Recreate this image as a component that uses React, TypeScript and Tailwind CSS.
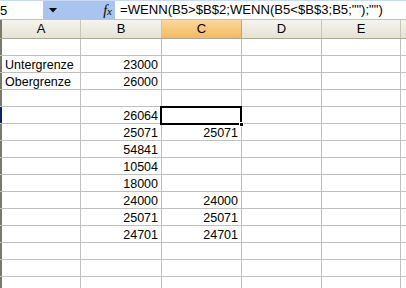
import React from 'react'

const cols = [
  { key: 'A', w: 'w-[79px]' },
  { key: 'B', w: 'w-[81px]' },
  { key: 'C', w: 'w-[80px]' },
  { key: 'D', w: 'w-[80px]' },
  { key: 'E', w: 'w-[79px]' },
]

// row data: [A, B, C]
const rows: [string, string, string][] = [
  ['', '', ''],
  ['Untergrenze', '23000', ''],
  ['Obergrenze', '26000', ''],
  ['', '', ''],
  ['', '26064', ''],
  ['', '25071', '25071'],
  ['', '54841', ''],
  ['', '10504', ''],
  ['', '18000', ''],
  ['', '24000', '24000'],
  ['', '25071', '25071'],
  ['', '24701', '24701'],
  ['', '', ''],
  ['', '', ''],
  ['', '', ''],
]

const font = { fontFamily: '"Liberation Sans", Arial, sans-serif' }

export default function App() {
  return (
    <div className="w-[406px] h-[288px] overflow-hidden bg-white relative" style={font}>
      {/* Formula bar */}
      <div className="h-[20px] flex bg-[#a9c5ef] border-t border-[#c7daf6]">
        <div className="w-[43px] h-[18px] bg-white overflow-hidden flex items-center">
          <span className="text-[13px] leading-none text-black">5</span>
        </div>
        <div className="w-[20px] flex items-center justify-center">
          <svg width="8" height="5" viewBox="0 0 8 5">
            <path d="M0 0 H8 L4 4.5 Z" fill="#000" />
          </svg>
        </div>
        <div className="w-[52px] flex items-center justify-end pr-[3px]">
          <span className="text-[14px] italic leading-none text-black" style={{ fontFamily: '"Liberation Serif", serif' }}>
            f<span className="text-[11px]">x</span>
          </span>
        </div>
        <div className="flex-1 h-[18px] bg-white flex items-center pl-[5px] overflow-hidden whitespace-nowrap">
          <span className="text-[13.1px] leading-none text-black">=WENN(B5&gt;$B$2;WENN(B5&lt;$B$3;B5;"");"")</span>
        </div>
      </div>

      {/* Column headers */}
      <div className="h-[19px] flex border-b border-[#aca899]">
        <div className="w-[2px] bg-[#7a7a6a]" />
        {cols.map((c) => (
          <div
            key={c.key}
            className={`${c.w} flex items-center justify-center text-[13px] text-black border-r ${
              c.key === 'C'
                ? 'bg-gradient-to-b from-[#fbd79c] to-[#f5b960] border-[#c8a46a]'
                : 'bg-gradient-to-b from-[#f5f4ee] to-[#e6e3d3] border-[#c9c6b6]'
            }`}
          >
            {c.key}
          </div>
        ))}
        <div className="flex-1 bg-gradient-to-b from-[#f5f4ee] to-[#e6e3d3]" />
      </div>

      {/* Grid rows */}
      {rows.map((r, i) => (
        <div key={i} className="h-[17px] flex border-b border-[#c0c0c0]">
          <div className={`w-[2px] ${i === 4 ? 'bg-[#0a246a]' : 'bg-[#7a7a6a]'}`} />
          {cols.map((c, ci) => {
            const v = ci < 3 ? r[ci] : ''
            const isText = ci === 0
            return (
              <div
                key={c.key}
                className={`${c.w} border-r border-[#c0c0c0] flex items-end pb-[1px] overflow-hidden whitespace-nowrap text-[12.5px] leading-none text-black ${
                  isText ? 'justify-start pl-[3px]' : 'justify-end pr-[3px]'
                }`}
              >
                {v}
              </div>
            )
          })}
          <div className="flex-1" />
        </div>
      ))}

      {/* Active cell C5 */}
      <div className="absolute left-[160px] top-[106px] w-[82px] h-[19px] border-2 border-black pointer-events-none">
        <div className="absolute -right-[4px] -bottom-[4px] w-[5px] h-[5px] bg-black border border-white" />
      </div>
    </div>
  )
}
